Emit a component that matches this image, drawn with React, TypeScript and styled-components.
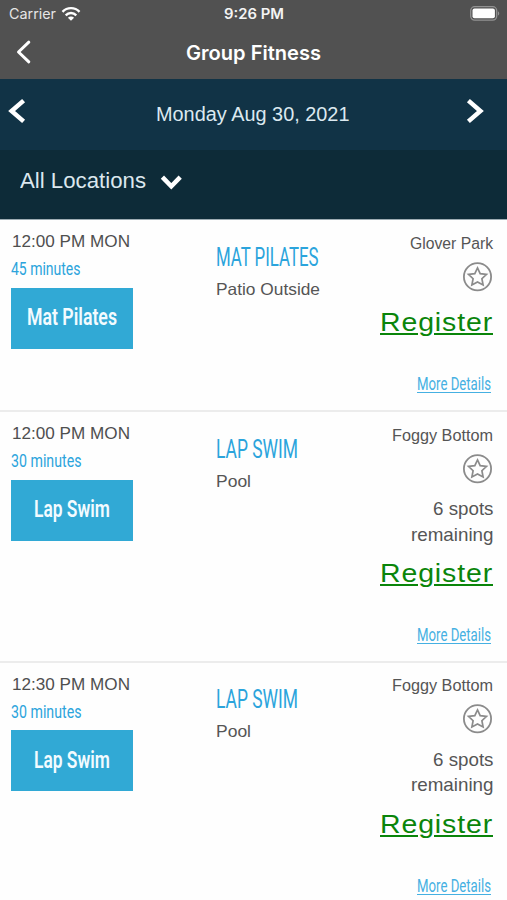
import React, { useLayoutEffect, useRef, useState } from "react";
import styled, { createGlobalStyle } from "styled-components";

const GlobalStyle = createGlobalStyle`
  * { box-sizing: border-box; }
  body { margin: 0; background: #fefefe; overflow: hidden; }
`;

const sans = `"Liberation Sans", Arial, sans-serif`;
const system = `Inter, sans-serif`;
const condensed = `Roboto, sans-serif`;

const FitBox = styled.span`
  display: block;
  flex: none;
  white-space: nowrap;
  text-decoration: inherit;
`;

const FitInner = styled.span`
  display: inline-block;
  transform-origin: left center;
  text-decoration: inherit;
`;

/* Stretches or condenses a line of text to a given width. */
function Fit({ width, children }: { width: number; children: string }) {
  const ref = useRef<HTMLSpanElement>(null);
  const [scale, setScale] = useState(1);
  useLayoutEffect(() => {
    if (ref.current) {
      const natural = parseFloat(getComputedStyle(ref.current).width);
      setScale(width / natural);
    }
  }, [width, children]);
  return (
    <FitBox style={{ width }}>
      <FitInner ref={ref} style={{ transform: `scaleX(${scale})` }}>
        {children}
      </FitInner>
    </FitBox>
  );
}

const Screen = styled.main`
  width: 507px;
  height: 900px;
  overflow: hidden;
  background: #fefefe;
  display: flex;
  flex-direction: column;
`;

const Header = styled.header`
  flex: none;
  height: 79px;
  background: #515151;
  color: #fff;
  font-family: ${system};
`;

const StatusBar = styled.div`
  display: grid;
  grid-template-columns: 1fr auto 1fr;
  height: 28px;
  padding: 0 7px 0 9px;
  align-items: center;
  font-size: 14px;
  line-height: 28px;
`;

const Carrier = styled.div`
  display: flex;
  align-items: center;
  gap: 5px;
  color: #e6e6e6;
`;

const Clock = styled.div`
  padding-right: 2px;
  font-weight: 600;
  color: #f4f4f4;
`;

const BatterySlot = styled.div`
  display: flex;
  justify-content: flex-end;
  padding-bottom: 2px;
`;

const NavBar = styled.div`
  display: grid;
  grid-template-columns: 1fr auto 1fr;
  align-items: center;
  height: 50px;
  padding: 0 16px;
`;

const NavTitle = styled.h1`
  margin: 0;
  padding-bottom: 1px;
  font-size: 20px;
  line-height: 28px;
  font-weight: 600;
`;

const IconButton = styled.button`
  display: flex;
  padding: 0;
  border: 0;
  background: none;
  color: #fff;
`;

const BackButton = styled(IconButton)`
  padding-bottom: 2px;
`;

const DateBar = styled.div`
  flex: none;
  height: 71px;
  padding: 0 22px 0 7px;
  display: flex;
  justify-content: space-between;
  align-items: flex-start;
  background: #113346;
  font-family: ${sans};
  font-size: 20px;
  color: #dce9f0;
  ${IconButton} { margin-top: 18px; }
`;

const DateLabel = styled.div`
  margin: 21px 0 0 14px;
  line-height: 28px;
`;

const LocationBar = styled.div`
  flex: none;
  height: 70px;
  padding: 17px 20px;
  display: flex;
  align-items: flex-start;
  gap: 13px;
  background: #0d2b38;
  border-bottom: 1px solid #9dacb3;
  font-family: ${sans};
  font-size: 21.5px;
  line-height: 28px;
  color: #dbe7ee;
  ${IconButton} { margin-top: 5px; }
`;

const Row = styled.article<{ $tall?: boolean }>`
  flex: none;
  display: grid;
  grid-template-columns: 205px 1fr auto;
  height: ${(p) => (p.$tall ? 250.5 : 192)}px;
  padding: 0 14px 0 11px;
  border-bottom: 2px solid #ececec;
  font-family: ${sans};
  color: #555;
`;

const Schedule = styled.div`
  padding-top: 10px;
`;

const Time = styled.div`
  padding-left: 1px;
  font-size: 17px;
  line-height: 24px;
  color: #4f4f4f;
`;

const Duration = styled.div`
  margin-top: 1.4px;
  font: 400 18.5px/28px ${condensed};
  color: #2ba4dc;
`;

const ClassButton = styled.button`
  display: flex;
  align-items: center;
  justify-content: center;
  width: 122px;
  height: 61px;
  margin-top: 4.6px;
  padding: 0 1px 2px 0;
  border: 0;
  background: #31a9d5;
  color: #f3fbff;
  font: 600 23.5px/30px ${condensed};
`;

const Info = styled.div`
  padding-top: 21.5px;
`;

const ClassName = styled.h2`
  margin: 0;
  font: 400 25px/32px ${condensed};
  color: #2ba4dc;
`;

const Room = styled.div`
  margin-top: 3px;
  font-size: 16.5px;
  line-height: 24px;
`;

const Booking = styled.div`
  display: flex;
  flex-direction: column;
  align-items: flex-end;
  padding-top: 12.8px;
`;

const Branch = styled.div`
  font-size: 16px;
  line-height: 22px;
`;

const StarButton = styled(IconButton)`
  margin-top: 7px;
  color: #8b8b8b;
`;

const Spots = styled.div`
  display: flex;
  flex-direction: column;
  align-items: flex-end;
  height: 46.2px;
  margin-top: 12.6px;
  font-size: 18.5px;
  line-height: 25.5px;
`;

const RegisterLink = styled.a`
  margin-top: 13.6px;
  font-size: 26px;
  line-height: 34px;
  letter-spacing: 0.8px;
  color: #0a850a;
  text-decoration: underline 2px;
  text-underline-offset: 2px;
`;

const DetailsLink = styled.a`
  margin: 32.1px 2px 0 0;
  font: 400 18.5px/26px ${condensed};
  color: #45b0e2;
  text-decoration: underline 1px;
  text-underline-offset: 2px;
`;

const Wifi = () => (
  <svg width="20" height="16" viewBox="0 0 20 16" fill="none" stroke="#fff" strokeWidth="2.400">
    <path d="M1.500 5.800C6.200.9 13.800.9 18.500 5.800" />
    <path d="M4.700 9.300c3-3 7.600-3 10.600 0" />
    <path d="M10 14.800 6.900 11.700c1.700-1.500 4.500-1.500 6.200 0z" fill="#fff" stroke="none" />
  </svg>
);

const Battery = () => (
  <svg width="30" height="15" viewBox="0 0 30 15">
    <rect x="0.700" y="0.700" width="26" height="13.400" rx="4" fill="none" stroke="#929292" strokeWidth="1.300" />
    <rect x="2.500" y="2.500" width="22.400" height="9.800" rx="2" fill="#fff" />
    <path d="M28 5.200c1.700.8 1.700 3.600 0 4.400z" fill="#929292" />
  </svg>
);

const BackIcon = () => (
  <svg width="15" height="24" viewBox="0 0 15 24" fill="none" stroke="currentColor" strokeWidth="3" strokeLinecap="round" strokeLinejoin="round">
    <path d="M12.800 2.200 2.500 12l10.300 9.800" />
  </svg>
);

const chevrons = {
  left: { w: 20, h: 28, d: "M16.600 3.600 4.600 14l12 10.400" },
  right: { w: 20, h: 28, d: "M3.400 3.600 15.400 14 3.400 24.400" },
  down: { w: 25, h: 20, d: "M3.400 5.100 12.300 14.300 21.200 5.100" },
};

const Chevron = ({ to }: { to: keyof typeof chevrons }) => {
  const { w, h, d } = chevrons[to];
  return (
    <svg width={w} height={h} viewBox={`0 0 ${w} ${h}`} fill="none" stroke="currentColor" strokeWidth="4.500">
      <path d={d} />
    </svg>
  );
};

const Star = () => (
  <svg width="31" height="30" viewBox="0 0 31 30" fill="none" stroke="currentColor">
    <circle cx="15.500" cy="14.800" r="13.600" strokeWidth="1.800" />
    <path
      d="M15.500 5.900 18.200 11.600l6.300.8-4.600 4.300 1.200 6.300-5.600-3.100-5.600 3.100 1.200-6.300-4.600-4.300 6.300-.8z"
      strokeWidth="1.700"
    />
  </svg>
);

type Label = [text: string, width: number];

interface Session {
  time: Label;
  duration: Label;
  button: Label;
  name: Label;
  room: Label;
  branch: Label;
  spots?: Label[];
}

const lapSwim = {
  duration: ["30 minutes", 70.5] as Label,
  button: ["Lap Swim", 76] as Label,
  name: ["LAP SWIM", 82] as Label,
  room: ["Pool", 35] as Label,
  branch: ["Foggy Bottom", 101] as Label,
  spots: [["6 spots", 60.5], ["remaining", 82.5]] as Label[],
};

const sessions: Session[] = [
  {
    time: ["12:00 PM MON", 118],
    duration: ["45 minutes", 69.5],
    button: ["Mat Pilates", 90],
    name: ["MAT PILATES", 102.5],
    room: ["Patio Outside", 104],
    branch: ["Glover Park", 83],
  },
  { time: ["12:00 PM MON", 118], ...lapSwim },
  { time: ["12:30 PM MON", 118], ...lapSwim },
];

const line = ([text, width]: Label) => (
  <Fit key={text} width={width}>{text}</Fit>
);

export default function App() {
  return (
    <>
      <GlobalStyle />
      <Screen>
        <Header>
          <StatusBar>
            <Carrier>
              <Fit width={47}>Carrier</Fit>
              <Wifi />
            </Carrier>
            <Clock>
              <Fit width={60}>9:26 PM</Fit>
            </Clock>
            <BatterySlot>
              <Battery />
            </BatterySlot>
          </StatusBar>
          <NavBar>
            <BackButton aria-label="Back"><BackIcon /></BackButton>
            <NavTitle>
              <Fit width={135}>Group Fitness</Fit>
            </NavTitle>
          </NavBar>
        </Header>
        <DateBar>
          <IconButton aria-label="Previous day"><Chevron to="left" /></IconButton>
          <DateLabel>
            <Fit width={193.5}>Monday Aug 30, 2021</Fit>
          </DateLabel>
          <IconButton aria-label="Next day"><Chevron to="right" /></IconButton>
        </DateBar>
        <LocationBar>
          <Fit width={126}>All Locations</Fit>
          <IconButton aria-label="Choose location"><Chevron to="down" /></IconButton>
        </LocationBar>
        {sessions.map((s, i) => (
          <Row key={i} $tall={Boolean(s.spots)}>
            <Schedule>
              <Time>{line(s.time)}</Time>
              <Duration>{line(s.duration)}</Duration>
              <ClassButton>{line(s.button)}</ClassButton>
            </Schedule>
            <Info>
              <ClassName>{line(s.name)}</ClassName>
              <Room>{line(s.room)}</Room>
            </Info>
            <Booking>
              <Branch>{line(s.branch)}</Branch>
              <StarButton aria-label="Add to favorites"><Star /></StarButton>
              {s.spots && <Spots>{s.spots.map(line)}</Spots>}
              <RegisterLink>
                <Fit width={113}>Register</Fit>
              </RegisterLink>
              <DetailsLink>
                <Fit width={74}>More Details</Fit>
              </DetailsLink>
            </Booking>
          </Row>
        ))}
      </Screen>
    </>
  );
}
